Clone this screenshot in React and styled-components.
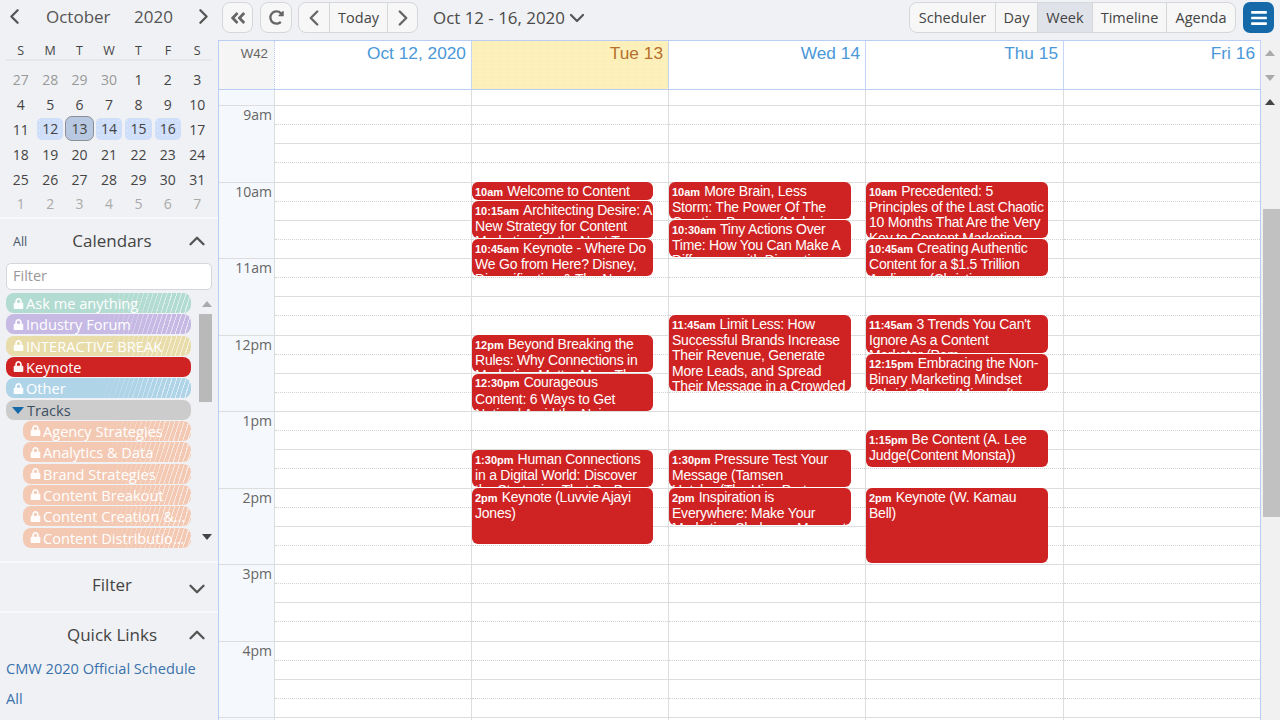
import React from "react";
import styled, { createGlobalStyle, css } from "styled-components";
import { FaLock, FaAngleDoubleLeft, FaRedoAlt, FaBars } from "react-icons/fa";
import { ChevronDown, ChevronUp, ChevronLeft, ChevronRight } from "lucide-react";

const Global = createGlobalStyle`
  html, body { margin: 0; padding: 0; width: 1280px; height: 720px; overflow: hidden; background: #f0f1f4; }
  * { box-sizing: border-box; }
  #root { width: 1280px; height: 720px; font-family: "Open Sans", "Liberation Sans", sans-serif; }
`;

const dots = css`
  background-image: radial-gradient(rgba(255,255,255,.45) .6px, transparent .8px);
  background-size: 5px 5px;
`;

const Page = styled.div`display: flex; width: 1280px; height: 720px; overflow: hidden;`;

/* Sidebar */
const Sidebar = styled.aside`
  width: 218px; flex: none; height: 720px; display: flex; flex-direction: column;
  background: #f0f1f4; color: #444;
`;
const MiniCal = styled.section`height: 217px; padding: 0 6px; flex: none;`;
const MonthHead = styled.div`
  height: 33px; display: flex; align-items: center; color: #555; font-size: 17px; line-height: 33px;
`;
const ArrowSlot = styled.span`
  width: 17px; display: flex; justify-content: center; color: #555; flex: none;
  svg { flex: none; }
`;
const MonthName = styled.span`margin-left: 23px; width: 88px;`;
const YearName = styled.span`flex: 1;`;
const MiniGrid = styled.div`display: grid; grid-template-columns: repeat(7, 1fr);`;
const DowRow = styled(MiniGrid)`
  height: 28px; border-bottom: 2px solid #e6e7ea; font-size: 12.5px; color: #444;
  align-items: center; padding-top: 8px;
`;
const Dow = styled.span`text-align: center;`;
const DayRows = styled(MiniGrid)`padding-top: 6.5px; grid-auto-rows: 24.8px;`;
const MiniDay = styled.span`
  display: flex; align-items: center; justify-content: center; font-size: 14px;
  color: ${p => (p.$muted ? "#aaa" : p.$dim ? "#999" : "#444")};
  position: relative; border-radius: 5px;
  ${p => p.$week && css`
    background-color: #cfdef9; margin: 1px 1.5px 2px; ${dots}
  `}
  ${p => p.$today && css`
    background-color: #b8c8e0; border: 1px solid #8b8f96; border-radius: 7px; margin: -1px 0 1px;
  `}
`;

const Panel = styled.section`
  flex: none; border-top: 2px solid #f7f8fa; padding: 0 6px;
`;
const PanelHead = styled.div`
  height: 44px; display: grid; grid-template-columns: 1fr auto 1fr; align-items: center;
  color: #444; font-size: 17px; padding: 0 0 2px 6px;
`;
const QuickHead = styled(PanelHead)`height: 40px; padding-top: 4px;`;
const AllLink = styled.span`font-size: 12.5px; color: #456; margin-left: 1px; margin-top: 2px;`;
const HeadIcon = styled.span`
  justify-self: end; display: flex; color: #555; margin-right: 2px; margin-top: ${p => (p.$down ? 9 : 2)}px;
  grid-column: 3;
`;
const FilterInput = styled.input`
  display: block; width: 206px; height: 27px; margin: 0; padding: 0 6px 2px; border: 1px solid #d4d6da;
  border-radius: 5px; font: 14.5px "Open Sans", sans-serif; background: #fff; color: #444;
  &::placeholder { color: #999; opacity: 1; }
`;
const ListWrap = styled.div`
  position: relative; height: 260px; margin-top: 3px; overflow: hidden; display: flex;
`;
const List = styled.ul`
  list-style: none; margin: 0; padding: 0; width: 185px; flex: none; display: flex; flex-direction: column; gap: 1.33px;
`;
const CalRow = styled.li`
  position: relative; height: 20px; border-radius: 8px; background: ${p => p.$bg};
  color: #fff; margin-left: ${p => (p.$sub ? "17px" : "0")};
  font-size: 14.6px; line-height: 20px; white-space: nowrap; overflow: hidden; flex: none;
  display: flex; align-items: center; padding-left: 7px;
  ${p => p.$striped && css`
    &::after {
      content: ""; position: absolute; inset: 0; pointer-events: none;
      background: repeating-linear-gradient(108deg, rgba(255,255,255,.6) 0 1px, transparent 1px 4.5px);
      -webkit-mask-image: linear-gradient(to right, transparent 50%, #000 90%);
      mask-image: linear-gradient(to right, transparent 50%, #000 90%);
    }
  `}
`;
const LockIcon = styled(FaLock)`font-size: 11px; flex: none; margin-right: 2px; opacity: .95;`;
const RowLabel = styled.span`overflow: hidden; text-overflow: ellipsis; padding-right: 5px;`;
const TriDown = styled.span`
  width: 0; height: 0; border-left: 6px solid transparent; border-right: 6px solid transparent;
  border-top: 7px solid #1569a8; margin: 1px 3px 0 -1px;
`;
const TracksLabel = styled.span`color: #3c4f63;`;
const ListScroll = styled.div`
  width: 17px; margin-left: 8px; flex: none; position: relative;
`;
const ScrollThumb = styled.div`
  position: absolute; left: 0; width: 17px; top: 21px; height: 88px; background: #b9b9b9;
`;
const Tri = styled.span`
  position: absolute; width: 0; height: 0; left: ${p => p.$left ?? 3}px; top: ${p => p.$top}px;
  border-left: 5px solid transparent; border-right: 5px solid transparent;
  ${p => p.$up
    ? css`border-bottom: 6px solid ${p.$color};`
    : css`border-top: 6px solid ${p.$color};`}
`;
const Gap = styled.div`height: 8px; flex: none;`;
const QuickLink = styled.a`
  display: block; font-size: 14.6px; color: #3a72ad; height: 30px; line-height: 30px; white-space: nowrap;
`;
const FilterPanel = styled(Panel)`height: 50px;`;

/* Main */
const Main = styled.main`flex: 1; display: flex; flex-direction: column; min-width: 0;`;
const Toolbar = styled.header`
  height: 40px; flex: none; display: flex; align-items: flex-start; padding: 2px 6px 0 4px; background: #f0f1f4;
`;
const Btn = styled.button`
  height: 31px; padding: 0; margin: 0; font: 14.5px "Open Sans", sans-serif; color: #444; background: #f7f7f8;
  border: 1px solid #d6d7da; display: flex; align-items: center; justify-content: center;
  width: ${p => p.$w}px; flex: none; border-radius: 8px;
`;
const IconBtn = styled(Btn)`color: #666; margin-right: ${p => p.$mr || 0}px;`;
const Group = styled.div`display: flex; flex: none;`;
const GroupBtn = styled(Btn)`
  border-radius: 0; margin-left: -1px; color: ${p => (p.$icon ? "#666" : "#444")};
  &:first-child { border-radius: 8px 0 0 8px; margin-left: 0; }
  &:last-child { border-radius: 0 8px 8px 0; }
  ${p => p.$active && css`background: #dfe2e8;`}
`;
const Range = styled.div`
  margin-left: 15px; height: 31px; display: flex; align-items: center; gap: 0; font-size: 16.9px; color: #4a4a4a;
`;
const Spacer = styled.div`flex: 1;`;
const MenuBtn = styled.button`
  width: 31px; height: 31px; border: 0; padding: 0; margin-left: 7px; border-radius: 7px; background: #1569a8; color: #fff;
  display: flex; align-items: center; justify-content: center;
`;

const Stage = styled.div`flex: 1; display: flex; min-height: 0;`;
const Calendar = styled.div`
  width: 1043px; flex: none; display: flex; flex-direction: column; background: #fff;
  border-left: 1px solid #b9cdf5;
`;
const columns = "56px 197px 197px 197px 198px 1fr";
const DayHeader = styled.div`
  height: 50px; flex: none; display: grid; grid-template-columns: ${columns};
  border-top: 1px solid #b9cdf5; border-bottom: 1px solid #b9cdf5;
`;
const WeekCell = styled.div`
  background: #f5f5f6; border-right: 1px dotted #b9cdf5; text-align: right; padding: 5px 6px 0 0;
  font: 13.3px/16px "Liberation Sans", sans-serif; color: #666;
`;
const DayCell = styled.div`
  border-right: 1px solid #c5d5f5; text-align: right; padding: 0 5px 0 0;
  font: 17.3px/24px "Liberation Sans", sans-serif; color: #4a98d8;
  ${p => p.$today && css`
    background-color: #fdf0bb; color: #b5702d;
    background-image: radial-gradient(rgba(210,160,90,.18) .6px, transparent .8px);
    background-size: 8px 8px;
  `}
`;
const Body = styled.div`
  flex: 1; min-height: 0; display: grid; grid-template-columns: ${columns}; overflow: hidden;
`;
const TimeColumn = styled.div`background: #f5f8fc; border-right: 1px solid #ddd;`;
const TopStub = styled.div`height: 16px; border-bottom: 1px solid #ddd;`;
const Hour = styled.div`
  height: 76.5px; border-bottom: 1px solid #ddd; text-align: right; padding-right: 2px;
  font-size: 14px; line-height: 17px; color: #666;
`;
const DayColumn = styled.div`position: relative; border-right: 1px solid ${p => (p.$last ? "#b9cdf5" : "#ddd")};`;
const Slot = styled.div`height: 19.125px; border-bottom: 1px ${p => (p.$dotted ? "dotted #d2d2d2" : "solid #ddd")};`;
const Event = styled.article`
  position: absolute; left: 0; width: ${p => p.$w}px; top: ${p => p.$top}px; height: ${p => p.$h}px;
  background: #cf2323; color: #fff; border-radius: 6px; overflow: hidden; white-space: pre-line;
  padding: 1.5px .5px 0 3px; font: 14px/15.33px "Liberation Sans", sans-serif; letter-spacing: -.22px;
`;
const EventTime = styled.b`font-size: 11px; margin-right: 4px; letter-spacing: 0;`;

const Scrollbar = styled.div`flex: 1; background: #f1f1f1; position: relative;`;
const PageThumb = styled.div`position: absolute; left: 2px; right: 0; top: 169px; height: 308px; background: #c1c1c1;`;

const weeks = [
  [[27,1],[28,1],[29,1],[30,1],[1],[2],[3]],
  [[4],[5],[6],[7],[8],[9],[10]],
  [[11],[12,0,1],[13,0,0,1],[14,0,1],[15,0,1],[16,0,1],[17]],
  [[18],[19],[20],[21],[22],[23],[24]],
  [[25],[26],[27],[28],[29],[30],[31]],
  [[1,2],[2,2],[3,2],[4,2],[5,2],[6,2],[7,2]],
];
const cals = [
  ["Ask me anything", "#b2dbd1"],
  ["Industry Forum", "#c6b9e4"],
  ["INTERACTIVE BREAK", "#e8dcaa"],
];
const tracks = ["Agency Strategies", "Analytics & Data", "Brand Strategies", "Content Breakout", "Content Creation & Storytelling", "Content Distribution & Promotion"];
const days = ["Oct 12, 2020", "Tue 13", "Wed 14", "Thu 15", "Fri 16"];
const hours = ["9am","10am","11am","12pm","1pm","2pm","3pm","4pm"];

const ev = (start, h, time, title) => ({ start, h, time, title });
const events = [
  [],
  [
    ev(0, 18, "10am", "Welcome to Content"),
    ev(19, 37, "10:15am", "Architecting Desire: A New Strategy for Content Marketing for the Next Ten Years"),
    ev(57, 37, "10:45am", "Keynote - Where Do We Go from Here? Disney, Diversification & The New Normal"),
    ev(153, 37, "12pm", "Beyond Breaking the Rules: Why Connections in Marketing Matter More Than Ever"),
    ev(191.5, 37, "12:30pm", "Courageous\nContent: 6 Ways to Get Noticed Amid the Noise"),
    ev(268, 37, "1:30pm", "Human Connections in a Digital World: Discover the Strategies That Do Be"),
    ev(306, 56, "2pm", "Keynote (Luvvie Ajayi Jones)"),
  ],
  [
    ev(0, 37, "10am", "More Brain, Less\nStorm: The Power Of The Creative Process (Melanie"),
    ev(38, 37, "10:30am", "Tiny Actions Over Time: How You Can Make A Difference with Disruption"),
    ev(133, 76, "11:45am", "Limit Less: How Successful Brands Increase Their Revenue, Generate More Leads, and Spread Their Message in a Crowded Market"),
    ev(268, 37, "1:30pm", "Pressure Test Your Message (Tamsen Hatcher(The Hive Partners"),
    ev(306, 37, "2pm", "Inspiration is Everywhere: Make Your Marketing Shake-up Moment"),
  ],
  [
    ev(0, 56, "10am", "Precedented: 5 Principles of the Last Chaotic 10 Months That Are the Very Key to Content Marketing"),
    ev(57, 37, "10:45am", "Creating Authentic Content for a $1.5 Trillion Audience (Christina"),
    ev(133, 38, "11:45am", "3 Trends You Can't Ignore As a Content\nMarketer (Pam"),
    ev(172, 37, "12:15pm", "Embracing the Non-Binary Marketing Mindset (Christi Olson (Microsoft"),
    ev(248, 37, "1:15pm", "Be Content (A. Lee Judge(Content Monsta))"),
    ev(306, 75, "2pm", "Keynote (W. Kamau\nBell)"),
  ],
  [],
];
const slotCount = 33;

export default function App() {
  return (
    <Page>
      <Global />
      <Sidebar>
        <MiniCal>
          <MonthHead>
            <ArrowSlot><ChevronLeft size={25} strokeWidth={2.2} /></ArrowSlot>
            <MonthName>October</MonthName>
            <YearName>2020</YearName>
            <ArrowSlot><ChevronRight size={25} strokeWidth={2.2} /></ArrowSlot>
          </MonthHead>
          <DowRow>{["S","M","T","W","T","F","S"].map((d, i) => <Dow key={i}>{d}</Dow>)}</DowRow>
          <DayRows>
            {weeks.flat().map(([n, dim, week, today], i) => (
              <MiniDay key={i} $dim={dim === 1} $muted={dim === 2} $week={!!week} $today={!!today}>{n}</MiniDay>
            ))}
          </DayRows>
        </MiniCal>
        <Panel>
          <PanelHead>
            <AllLink>All</AllLink>
            <span>Calendars</span>
            <HeadIcon><ChevronUp size={26} strokeWidth={2.2} /></HeadIcon>
          </PanelHead>
          <FilterInput placeholder="Filter" readOnly />
          <ListWrap>
            <List>
              {cals.map(([name, bg]) => (
                <CalRow key={name} $bg={bg} $striped><LockIcon /><RowLabel>{name}</RowLabel></CalRow>
              ))}
              <CalRow $bg="#cf2323"><LockIcon /><RowLabel>Keynote</RowLabel></CalRow>
              <CalRow $bg="#afd4e8" $striped><LockIcon /><RowLabel>Other</RowLabel></CalRow>
              <CalRow $bg="#cccccc"><TriDown /><TracksLabel>Tracks</TracksLabel></CalRow>
              {tracks.map(name => (
                <CalRow key={name} $bg="#f3c9b3" $sub $striped><LockIcon /><RowLabel>{name}</RowLabel></CalRow>
              ))}
            </List>
            <ListScroll>
              <Tri $top={8} $up $color="#aaa" />
              <ScrollThumb />
              <Tri $top={241} $color="#444" />
            </ListScroll>
          </ListWrap>
        </Panel>
        <Gap />
        <FilterPanel>
          <PanelHead>
            <span />
            <span>Filter</span>
            <HeadIcon $down><ChevronDown size={26} strokeWidth={2.2} /></HeadIcon>
          </PanelHead>
        </FilterPanel>
        <Panel>
          <QuickHead>
            <span />
            <span>Quick Links</span>
            <HeadIcon><ChevronUp size={26} strokeWidth={2.2} /></HeadIcon>
          </QuickHead>
          <QuickLink>CMW 2020 Official Schedule</QuickLink>
          <QuickLink>All</QuickLink>
        </Panel>
      </Sidebar>
      <Main>
        <Toolbar>
          <IconBtn $w={31} $mr={7}><FaAngleDoubleLeft size={18} /></IconBtn>
          <IconBtn $w={32} $mr={6}><FaRedoAlt size={15} /></IconBtn>
          <Group>
            <GroupBtn $w={32} $icon><ChevronLeft size={26} strokeWidth={2.2} /></GroupBtn>
            <GroupBtn $w={59}>Today</GroupBtn>
            <GroupBtn $w={31} $icon><ChevronRight size={26} strokeWidth={2.2} /></GroupBtn>
          </Group>
          <Range>Oct 12 - 16, 2020<ChevronDown size={24} strokeWidth={2.2} color="#555" /></Range>
          <Spacer />
          <Group>
            <GroupBtn $w={87}>Scheduler</GroupBtn>
            <GroupBtn $w={43}>Day</GroupBtn>
            <GroupBtn $w={56} $active>Week</GroupBtn>
            <GroupBtn $w={75}>Timeline</GroupBtn>
            <GroupBtn $w={70}>Agenda</GroupBtn>
          </Group>
          <MenuBtn aria-label="Menu"><FaBars size={18} /></MenuBtn>
        </Toolbar>
        <Stage>
          <Calendar>
            <DayHeader>
              <WeekCell>W42</WeekCell>
              {days.map((d, i) => <DayCell key={d} $today={i === 1}>{d}</DayCell>)}
            </DayHeader>
            <Body>
              <TimeColumn>
                <TopStub />
                {hours.map(h => <Hour key={h}>{h}</Hour>)}
              </TimeColumn>
              {events.map((list, c) => (
                <DayColumn key={c} $last={c === 4}>
                  <TopStub />
                  {Array.from({ length: slotCount }, (_, i) => <Slot key={i} $dotted={i % 2 === 0} />)}
                  {list.map(e => (
                    <Event key={e.time} $top={92.3 + e.start} $h={e.h} $w={c === 1 ? 181 : 182}>
                      <EventTime>{e.time}</EventTime>{e.title}
                    </Event>
                  ))}
                </DayColumn>
              ))}
            </Body>
          </Calendar>
          <Scrollbar>
            <Tri $top={10} $left={4} $up $color="#aaa" />
            <Tri $top={35} $left={4} $color="#aaa" />
            <Tri $top={59} $left={4} $up $color="#444" />
            <PageThumb />
          </Scrollbar>
        </Stage>
      </Main>
    </Page>
  );
}
